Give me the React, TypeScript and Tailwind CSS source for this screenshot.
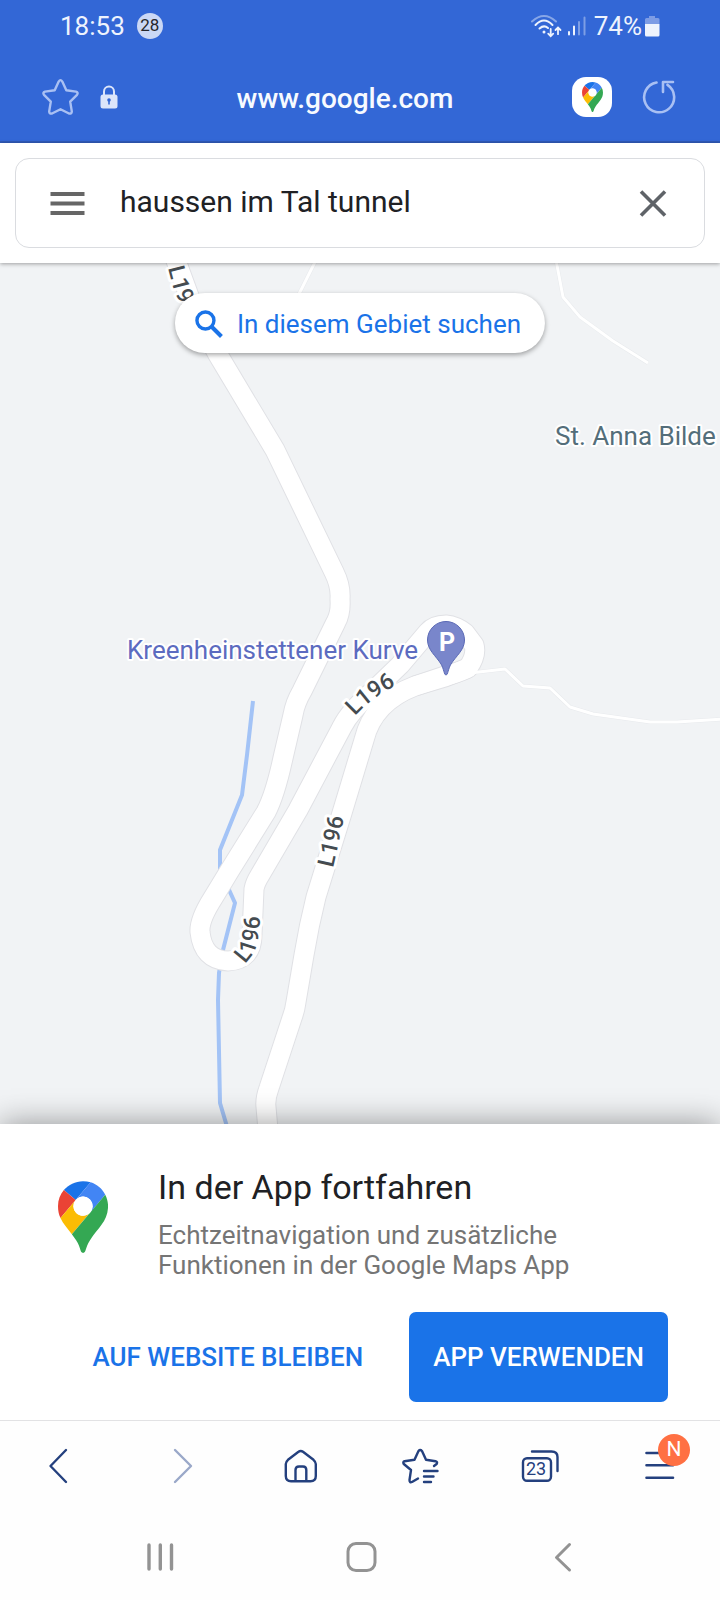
import React, { useState } from 'react';

const MapsPin = ({ className }: { className?: string }) => (
    <svg viewBox="0 0 92.3 132.3" className={className} aria-hidden="true">
        <path fill="#1a73e8" d="M60.2 2.2C55.8.8 51 0 46.1 0 32 0 19.3 6.4 10.8 16.5l21.8 18.3L60.2 2.2z" />
        <path fill="#ea4335" d="M10.8 16.5C4.1 24.5 0 34.9 0 46.1c0 8.7 1.7 15.7 4.6 22l28-33.3-21.8-18.3z" />
        <path fill="#4285f4" d="M46.2 28.5c9.8 0 17.7 7.9 17.7 17.7 0 4.3-1.6 8.3-4.2 11.4 0 0 13.9-16.6 27.5-32.7-5.6-10.8-15.3-19-27-22.7L32.6 34.8c3.3-3.8 8.1-6.3 13.6-6.3" />
        <path fill="#fbbc04" d="M46.2 63.8c-9.8 0-17.7-7.9-17.7-17.7 0-4.3 1.5-8.3 4.1-11.3l-28 33.3c4.8 10.6 12.8 19.2 21 29.9l34.1-40.5c-3.3 3.9-8.1 6.3-13.5 6.3" />
        <path fill="#34a853" d="M59.1 109.2c15.4-24.1 33.3-35 33.3-63 0-7.7-1.9-14.9-5.2-21.3L25.6 98c2.6 3.4 5.3 7.3 7.9 11.3 9.4 14.5 6.8 23.1 12.8 23.1s3.4-8.7 12.8-23.2" />
        <circle cx="46.2" cy="46.2" r="17.7" fill="#fff" />
    </svg>
);

const StatusBar = () => (
    <div className="flex h-[52px] items-center justify-between px-[60px] text-[26px] text-[#eef3fd]">
        <div className="flex items-center gap-3">
            <span>18:53</span>
            <span className="flex h-[26px] w-[26px] items-center justify-center rounded-full bg-[#cbd8f5] text-[17px] text-[#26282c]">28</span>
        </div>
        <div className="flex items-center gap-[2px]">
            <svg width="60" height="26" viewBox="0 0 60 26" fill="none" stroke="#eef3fd" strokeWidth="2" strokeLinecap="round" className="mr-1" aria-hidden="true">
                <path d="M4 8.500Q16 -2.500 28 8.500" opacity=".45" />
                <path d="M7.500 12Q16 3 24.500 12M11.500 15.500Q16 11.500 20 15" />
                <circle cx="16" cy="19" r="1.500" fill="#eef3fd" stroke="none" />
                <path d="M22.700 16v7M20.200 20.700l2.500 2.500 2.500-2.500M30 21.200v-6.500M27.500 17l2.500-2.500 2.500 2.500" strokeWidth="1.800" />
                <path d="M41 21.500v-2.500M46 21.500v-8" />
                <path d="M51 21.500V9M56.500 21.500V4.500" opacity=".4" />
            </svg>
            <span>74%</span>
            <svg width="16" height="22" viewBox="0 0 16 22" aria-hidden="true">
                <path d="M5 1h6v2h3a1.500 1.500 0 0 1 1.500 1.500V9H1V4.500A1.500 1.500 0 0 1 2.500 3H5z" fill="#7d9ce5" />
                <path d="M1 9h14.500v11a1.500 1.500 0 0 1-1.500 1.500H2.500A1.500 1.500 0 0 1 1 20z" fill="#eef3fd" />
            </svg>
        </div>
    </div>
);

const AddressBar = () => (
    <div className="flex h-[91px] items-center border-b-2 border-[#2f5ab8] pr-[44px] pl-[42px]">
        <div className="flex items-center gap-[21px]">
            <button type="button" aria-label="Lesezeichen hinzufügen">
                <svg width="37" height="38" viewBox="0 0 37 38" fill="none" stroke="#a9c0f3" strokeWidth="2.400" strokeLinejoin="round" aria-hidden="true">
                    <path d="M16.700 3.600Q18.500 0.600 20.300 3.600L24.300 12.300L34 13.600Q36.600 14.600 35 16.800L28.200 23.600L29.800 33.400Q29.700 36.200 27 35.500L18.500 31.200L10 35.500Q7.300 36.200 7.200 33.400L8.800 23.600L2 16.800Q0.400 14.600 3 13.600L12.700 12.300Z" />
                </svg>
            </button>
            <svg width="18" height="24" viewBox="0 0 18 24" aria-hidden="true">
                <path d="M4 10V6.500a5 5 0 0 1 10 0V10" fill="none" stroke="#dce5fa" strokeWidth="2" />
                <rect x="0.500" y="9.500" width="17" height="14" rx="2.500" fill="#dce5fa" />
                <circle cx="9" cy="15" r="1.800" fill="#3367d6" />
                <path d="M8.200 15h1.600v4.500H8.200z" fill="#3367d6" />
            </svg>
        </div>
        <span className="flex-1 pt-1 text-center text-[28px] font-medium text-[#f7faff]">www.google.com</span>
        <div className="flex items-center gap-[30px]">
            <button type="button" aria-label="In Google Maps öffnen" className="flex h-[40px] w-[40px] items-center justify-center rounded-[14px] bg-white">
                <MapsPin className="h-[30px] w-[21px]" />
            </button>
            <button type="button" aria-label="Neu laden">
                <svg width="34" height="34" viewBox="0 0 34 34" fill="none" stroke="#a9c0f3" strokeWidth="2.600" strokeLinecap="round" strokeLinejoin="round" aria-hidden="true">
                    <path d="M14.500 2.500A15 15 0 1 0 25.500 4.800M31 2H21V12" />
                </svg>
            </button>
        </div>
    </div>
);

const SearchBox = () => {
    const [query, setQuery] = useState('haussen im Tal tunnel');

    return (
        <div className="relative z-10 bg-white p-[15px] shadow-[0_1px_4px_rgba(0,0,0,0.35)]">
            <div className="flex h-[90px] items-center rounded-[14px] border border-[#dadce0] pr-[33px] pl-[34px]">
                <button type="button" aria-label="Menü">
                    <svg width="35" height="24" viewBox="0 0 35 24" fill="#666" aria-hidden="true">
                        <path d="M0.500 1h34v4h-34zM0.500 10.500h34v4h-34zM0.500 20h34v4h-34z" />
                    </svg>
                </button>
                <input
                    type="text"
                    aria-label="In Google Maps suchen"
                    value={query}
                    onChange={(e) => setQuery(e.target.value)}
                    className="ml-[35px] min-w-0 flex-1 bg-transparent pb-[4px] text-[30px] text-[#202124] focus:outline-none"
                />
                <button type="button" aria-label="Suche löschen" onClick={() => setQuery('')} className="ml-4 p-1">
                    <svg width="28" height="28" viewBox="0 0 28 28" stroke="#5f6368" strokeWidth="3.600" aria-hidden="true">
                        <path d="M2 2.500l24 24M26 2.500L2 26.500" />
                    </svg>
                </button>
            </div>
        </div>
    );
};

const ROADS = [
    'M172 250L178 266L196 315L217 353L275 450L334 572Q341 586 340 599Q341 613 336 622L302 691Q295 703 293 715L283 758Q275 795 266 812L230 870L213 898Q199 920 200 932Q203 960 228 961Q252 960 252 935L254 889Q255 883 260 875L298 810L342 727Q350 711 372 692L400 665L428 632Q434 625 446 625Q456 626 465 633L474 645Q477 655 468 668L445 677L415 686',
    'M468 668Q455 674 445 676L415 686Q373 702 364 740L342 813L316 897Q309 925 304 955L296 1002Q295 1010 292 1018L269 1088Q265 1099 266 1107L268 1130',
];

const PATHS = [
    'M315 262L299 294',
    'M556 260L563 297L580 317L613 341L648 363',
    'M470 673L505 669L523 686L550 688L570 707L593 714L650 722L677 722L722 719',
];

const ROAD_LABELS = [
    { id: 'l196-north', name: 'L19', d: 'M168 268L173 287L192 334' },
    { id: 'l196-bend', name: 'L196', d: 'M355 716Q371 698 402 682' },
    { id: 'l196-east', name: 'L196', d: 'M333 868L347 805' },
    { id: 'l196-west', name: 'L196', d: 'M245 964L254 953Q260 940 261 900' },
];

const MapView = () => (
    <svg viewBox="0 263 720 861" preserveAspectRatio="xMidYMid slice" className="absolute inset-0 h-full w-full" role="img" aria-label="Karte">
        <rect y="263" width="720" height="861" fill="#f1f3f5" />
        <path d="M253 701L247 755L242 795L220 850V870L235 903L223 950L219 973L218 1000L220 1103L228 1130" fill="none" stroke="#a3c3f6" strokeWidth="4" />
        <g fill="none" strokeLinejoin="round">
            {PATHS.map((d) => <path key={d} d={d} stroke="#e8eaed" strokeWidth="4" />)}
            {ROADS.map((d) => <path key={d} d={d} stroke="#e0e1e5" strokeWidth="21" />)}
            {PATHS.map((d) => <path key={d} d={d} stroke="#fff" strokeWidth="3" />)}
            {ROADS.map((d) => <path key={d} d={d} stroke="#fff" strokeWidth="19" />)}
        </g>
        <g fontSize="23" fontWeight="500" fill="#444b50" stroke="#fff" strokeWidth="6" strokeLinejoin="round" paintOrder="stroke">
            {ROAD_LABELS.map(({ id, name, d }) => (
                <React.Fragment key={id}>
                    <path id={id} d={d} fill="none" stroke="none" />
                    <text><textPath href={`#${id}`}>{name}</textPath></text>
                </React.Fragment>
            ))}
        </g>
        <g fontSize="26" stroke="#fff" strokeWidth="4" strokeLinejoin="round" paintOrder="stroke">
            <text x="555" y="445" fill="#546e7a">St. Anna Bilde</text>
            <text x="127" y="659" fill="#5c6bc0">Kreenheinstettener Kurve</text>
        </g>
        <path d="M446 675C444 675 444 669 441 664C436 656 427.500 650 427.500 640A18.500 18.500 0 0 1 464.500 640C464.500 650 456 656 451 664C448 669 448 675 446 675Z" fill="#7986cb" stroke="#5a69b5" />
        <text x="447" y="651" textAnchor="middle" fontSize="25" fontWeight="700" fill="#fff">P</text>
    </svg>
);

const AppPrompt = () => (
    <section className="relative bg-white pt-[44px] pr-[52px] pb-[18px] pl-[58px] shadow-[0_0_30px_rgba(0,0,0,0.4)]">
        <div className="flex gap-[50px]">
            <MapsPin className="mt-[13px] h-[72px] w-[50px] shrink-0" />
            <div>
                <h1 className="text-[34px] leading-[38px] text-[#202124]">In der App fortfahren</h1>
                <p className="mt-[14px] max-w-[440px] text-[26px] leading-[30px] text-[#757575]">
                    Echtzeitnavigation und zusätzliche Funktionen in der Google Maps App
                </p>
            </div>
        </div>
        <div className="mt-[32px] flex justify-end gap-[22px] text-[26px] font-medium">
            <button type="button" className="h-[90px] px-[24px] text-[#1a73e8]">AUF WEBSITE BLEIBEN</button>
            <button type="button" className="h-[90px] rounded-[7px] bg-[#1a73e8] px-[24px] text-white">APP VERWENDEN</button>
        </div>
    </section>
);

const ToolButton = ({ label, children }: { label: string, children: React.ReactNode }) => (
    <button type="button" aria-label={label} className="flex items-center justify-center">{children}</button>
);

const Toolbar = () => (
    <nav className="relative grid h-[92px] grid-cols-6 border-t border-[#e2e2e4] bg-[#fefefe] pb-[2px]">
        <ToolButton label="Zurück">
            <svg width="40" height="40" viewBox="0 0 40 40" fill="none" stroke="#24407e" strokeWidth="2.400" strokeLinecap="round" strokeLinejoin="round">
                <path d="M26 4L10.500 20L26 36" />
            </svg>
        </ToolButton>
        <ToolButton label="Vorwärts">
            <svg width="40" height="40" viewBox="0 0 40 40" fill="none" stroke="#9aa8c9" strokeWidth="2.400" strokeLinecap="round" strokeLinejoin="round">
                <path d="M15 4L31 20L15 36" />
            </svg>
        </ToolButton>
        <ToolButton label="Startseite">
            <svg width="40" height="40" viewBox="0 0 40 40" fill="none" stroke="#24407e" strokeWidth="2.400" strokeLinejoin="round">
                <path d="M18.500 5.800Q20.700 4 23 5.800L33.500 13.800Q35.800 15.800 35.800 18V30Q35.800 35.200 30.500 35.200H11Q5.800 35.200 5.800 30V18Q5.800 15.800 8 13.800Z" />
                <path d="M15.500 35V24Q15.500 20.500 19 20.500H23Q26.300 20.500 26.300 24V35" />
            </svg>
        </ToolButton>
        <ToolButton label="Lesezeichen">
            <svg width="40" height="40" viewBox="0 0 40 40" fill="none" stroke="#24407e" strokeWidth="2.400" strokeLinecap="round" strokeLinejoin="round">
                <path d="M34 20L36.600 18Q38 15.800 35.500 15.200L26 13.800L22 5Q20.200 3 18.500 5L14.500 13.800L4.500 15.200Q2.500 16 3.800 18L11 24L9.500 34Q9.500 37 12 36L18 32.500" />
                <path d="M24 25h13.500M24 30.500h9.500M24 36h7" />
            </svg>
        </ToolButton>
        <ToolButton label="Tabs">
            <svg width="44" height="40" viewBox="0 0 44 40" fill="none" stroke="#24407e" strokeWidth="2.400" strokeLinecap="round">
                <rect x="5" y="12.200" width="28" height="22.500" rx="4" />
                <path d="M14 5.500H33.500Q39.500 5.500 39.500 11V25" />
                <text x="18" y="29" textAnchor="middle" fontSize="18" fill="#24407e" stroke="none">23</text>
            </svg>
        </ToolButton>
        <ToolButton label="Mehr">
            <span className="relative">
                <svg width="30" height="40" viewBox="0 0 30 40" fill="none" stroke="#24407e" strokeWidth="2.600" strokeLinecap="round">
                    <path d="M1.500 7H28M1.500 19.300H28M1.500 31.700H28" />
                </svg>
                <span className="absolute -top-[12px] left-[13px] flex h-[32px] w-[32px] items-center justify-center rounded-full bg-[#ff7043] text-[21px] text-white">N</span>
            </span>
        </ToolButton>
    </nav>
);

const SystemNav = () => (
    <nav className="grid h-[88px] grid-cols-3 bg-[#fefefe] px-[60px] pt-[2px]">
        <ToolButton label="Letzte Apps">
            <svg width="32" height="32" viewBox="0 0 32 32" stroke="#939393" strokeWidth="3.400" strokeLinecap="round">
                <path d="M5 4v24M16.300 4v24M27.500 4v24" />
            </svg>
        </ToolButton>
        <ToolButton label="Home">
            <svg width="34" height="32" viewBox="0 0 34 32" fill="none" stroke="#939393" strokeWidth="3">
                <rect x="5" y="2.500" width="27" height="27" rx="8" />
            </svg>
        </ToolButton>
        <ToolButton label="Android zurück">
            <svg width="32" height="32" viewBox="0 0 32 32" fill="none" stroke="#939393" strokeWidth="3" strokeLinecap="round" strokeLinejoin="round">
                <path d="M25.500 3.500L12.500 16.500L25.500 29" />
            </svg>
        </ToolButton>
    </nav>
);

const App: React.FC = () => (
    <div className="flex min-h-screen flex-col overflow-hidden bg-white font-['Roboto',sans-serif]">
        <header className="bg-[#3367d6]">
            <StatusBar />
            <AddressBar />
        </header>
        <SearchBox />
        <main className="relative min-h-[400px] flex-1">
            <MapView />
            <button type="button" className="absolute top-[30px] left-1/2 flex h-[60px] w-max -translate-x-1/2 items-center gap-[14px] rounded-full bg-white pt-[2px] pr-[24px] pl-[20px] text-[26px] text-[#1a73e8] shadow-[0_2px_5px_rgba(0,0,0,0.35)]">
                <svg width="28" height="28" viewBox="0 0 28 28" fill="none" stroke="#1a73e8" strokeWidth="3.400" aria-hidden="true">
                    <circle cx="10.500" cy="10.500" r="8.500" />
                    <path d="M16.500 16.500L26.500 26.500" strokeWidth="4" />
                </svg>
                <span>In diesem Gebiet suchen</span>
            </button>
        </main>
        <AppPrompt />
        <Toolbar />
        <SystemNav />
    </div>
);

export default App;
